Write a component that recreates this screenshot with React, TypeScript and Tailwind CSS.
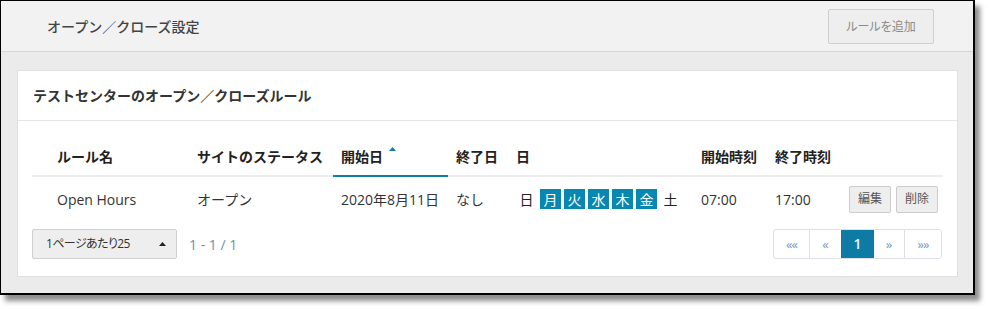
import React from "react";

const font = "font-['Open_Sans','Noto_Sans_CJK_JP',sans-serif]";

function Caret({ className = "" }: { className?: string }) {
  return (
    <svg width="7" height="4" viewBox="0 0 7 4" className={className}>
      <polygon points="0,4 3.5,0 7,4" fill="currentColor" />
    </svg>
  );
}

const days = [
  { d: "日", on: false },
  { d: "月", on: true },
  { d: "火", on: true },
  { d: "水", on: true },
  { d: "木", on: true },
  { d: "金", on: true },
  { d: "土", on: false },
];

const cols = "grid grid-cols-[17px_140px_144px_115px_60px_185px_74px_74px_1fr]";

export default function App() {
  return (
    <div className={`w-[989px] h-[309px] bg-white ${font}`}>
      <div className="w-[975px] h-[295px] border-black border-t border-l border-r-2 border-b-2 shadow-[5px_6px_5px_rgba(0,0,0,0.45)] flex flex-col bg-[#ebebeb]">
        {/* header */}
        <div className="h-[51px] shrink-0 bg-[#f2f2f2] border-b border-[#d6d6d6] flex items-center justify-between pl-[46px] pr-[39px]">
          <div className="text-[14px] font-medium text-[#444]">オープン／クローズ設定</div>
          <button className="w-[106px] h-[35px] mt-[1px] bg-[#eeeeee] border border-[#cfcfcf] rounded-[2px] text-[12px] text-[#8a8a8a] [font-feature-settings:'palt']">
            ルールを追加
          </button>
        </div>
        {/* body */}
        <div className="flex-1 pl-[16px] pr-[15px] pt-[18px] pb-[16px]">
          <div className="h-[207px] bg-white border border-[#e0e0e0] flex flex-col">
            <div className="h-[50px] shrink-0 border-b border-[#e6e6e6] flex items-center px-[15px] text-[14px] font-bold text-[#333]">
              テストセンターのオープン／クローズルール
            </div>
            <div className="px-[14px] pt-[14px]">
              {/* table header */}
              <div className={`${cols} text-[14px] font-bold text-[#222]`}>
                <div className="h-[42px] border-b-2 border-[#ededed]" />
                <div className="h-[42px] border-b-2 border-[#ededed] pl-[8px] pt-[12px] leading-[20px]">ルール名</div>
                <div className="h-[42px] border-b-2 border-[#ededed] pl-[8px] pt-[12px] leading-[20px]">サイトのステータス</div>
                <div className="h-[42px] border-b-2 border-[#0e7fa5] pl-[8px] pt-[12px] leading-[20px] flex items-start">
                  <span>開始日</span>
                  <Caret className="ml-[6px] mt-[0px] text-[#0e7fa5]" />
                </div>
                <div className="h-[42px] border-b-2 border-[#ededed] pl-[8px] pt-[12px] leading-[20px]">終了日</div>
                <div className="h-[42px] border-b-2 border-[#ededed] pl-[8px] pt-[12px] leading-[20px]">日</div>
                <div className="h-[42px] border-b-2 border-[#ededed] pl-[8px] pt-[12px] leading-[20px]">開始時刻</div>
                <div className="h-[42px] border-b-2 border-[#ededed] pl-[8px] pt-[12px] leading-[20px]">終了時刻</div>
                <div className="h-[42px] border-b-2 border-[#ededed]" />
              </div>
              {/* row */}
              <div className={`${cols} h-[44px] items-center text-[14px] text-[#333]`}>
                <div />
                <div className="pl-[8px]">Open Hours</div>
                <div className="pl-[8px]">オープン</div>
                <div className="pl-[8px]">2020年8月11日</div>
                <div className="pl-[8px]">なし</div>
                <div className="pl-[8px] flex gap-[3px]">
                  {days.map((x) => (
                    <span
                      key={x.d}
                      className={
                        x.on
                          ? "w-[21px] h-[20px] flex items-center justify-center bg-[#0887b3] text-white"
                          : "w-[21px] h-[20px] flex items-center justify-center text-[#222]"
                      }
                    >
                      {x.d}
                    </span>
                  ))}
                </div>
                <div className="pl-[8px]">07:00</div>
                <div className="pl-[8px]">17:00</div>
                <div className="flex justify-end gap-[5px] pr-[5px]">
                  <button className="w-[42px] h-[27px] bg-[#eeeeee] border border-[#cccccc] rounded-[2px] text-[12px] text-[#555]">編集</button>
                  <button className="w-[42px] h-[27px] bg-[#eeeeee] border border-[#cccccc] rounded-[2px] text-[12px] text-[#555]">削除</button>
                </div>
              </div>
              {/* pagination row */}
              <div className="mt-[8px] h-[30px] flex items-center justify-between">
                <div className="flex items-center">
                  <div className="w-[145px] h-[30px] bg-[#eeeeee] border border-[#cfcfcf] rounded-[2px] flex items-center justify-between pl-[13px] pr-[10px] text-[12px] tracking-[-0.6px] text-[#333] [font-feature-settings:'palt']">
                    <span>1ページあたり25</span>
                    <Caret className="text-[#222]" />
                  </div>
                  <span className="ml-[12px] text-[14px] text-[#6f8fa8]">1 - 1 / 1</span>
                </div>
                <div className="flex h-[30px] border border-[#dde1e6] rounded-[3px] text-[13px] leading-none text-[#7a98c0] overflow-hidden mr-[1px]">
                  <div className="w-[36px] flex items-center justify-center border-r border-[#dde1e6] tracking-[-1px]">««</div>
                  <div className="w-[31px] flex items-center justify-center">«</div>
                  <div className="w-[33px] flex items-center justify-center bg-[#0e7ba5] text-[14px] font-semibold text-[#e6f6fc]">1</div>
                  <div className="w-[31px] flex items-center justify-center border-r border-[#dde1e6]">»</div>
                  <div className="w-[36px] flex items-center justify-center tracking-[-1px]">»»</div>
                </div>
              </div>
            </div>
          </div>
        </div>
      </div>
    </div>
  );
}
